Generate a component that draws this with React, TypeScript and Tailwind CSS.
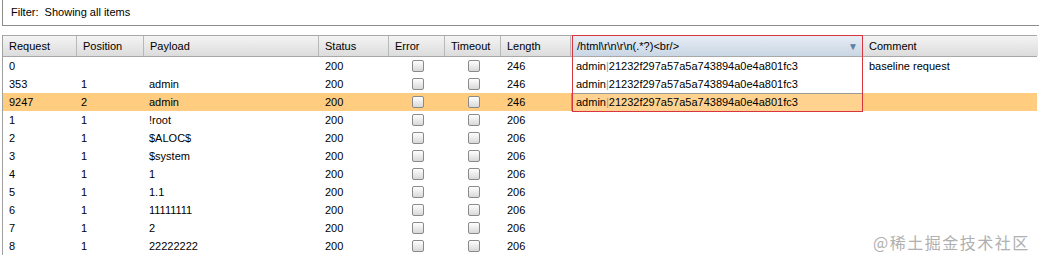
import React from 'react';

const headers = ['Request', 'Position', 'Payload', 'Status', 'Error', 'Timeout', 'Length', '/html\\r\\n\\r\\n(.*?)<br/>', 'Comment'];

type Row = { req: string; pos: string; payload: string; status: string; len: string; hash?: boolean; comment?: string; hl?: boolean };

const rows: Row[] = [
  { req: '0', pos: '', payload: '', status: '200', len: '246', hash: true, comment: 'baseline request' },
  { req: '353', pos: '1', payload: 'admin', status: '200', len: '246', hash: true },
  { req: '9247', pos: '2', payload: 'admin', status: '200', len: '246', hash: true, hl: true },
  { req: '1', pos: '1', payload: '!root', status: '200', len: '206' },
  { req: '2', pos: '1', payload: '$ALOC$', status: '200', len: '206' },
  { req: '3', pos: '1', payload: '$system', status: '200', len: '206' },
  { req: '4', pos: '1', payload: '1', status: '200', len: '206' },
  { req: '5', pos: '1', payload: '1.1', status: '200', len: '206' },
  { req: '6', pos: '1', payload: '11111111', status: '200', len: '206' },
  { req: '7', pos: '1', payload: '2', status: '200', len: '206' },
  { req: '8', pos: '1', payload: '22222222', status: '200', len: '206' },
];

const gridCols = 'grid grid-cols-[74px_67px_175px_70px_56px_56px_70px_292px_175px]';

function Check() {
  return (
    <div className="w-[12px] h-[12px] rounded-[2px] border border-[#8a8a8a] bg-gradient-to-b from-[#ffffff] to-[#d8d8d8]" />
  );
}

function Hash() {
  return (
    <span>
      admin<span className="text-[#999]">|</span>21232f297a57a5a743894a0e4a801fc3
    </span>
  );
}

export default function App() {
  return (
    <div className="relative w-[1039px] h-[257px] bg-white overflow-hidden text-[11px] text-black font-['Liberation_Sans',Arial,sans-serif]">
      <div className="ml-[2px] h-[26px] border-l border-b border-[#8c8c8c] pl-[8px] flex items-center">
        Filter:&nbsp;&nbsp;Showing all items
      </div>
      <div className="relative mt-[9px] ml-[2px] w-[1035px] border-l border-[#a0a0a0]">
        <div className={`${gridCols} h-[22px] border-t border-b border-[#a8a8a8] border-r`}>
          {headers.map((h, i) => (
            <div
              key={i}
              className={`flex items-center pl-[6px] border-r border-[#b8b8b8] last:border-r-0 ${
                i === 7
                  ? 'bg-gradient-to-b from-[#e6edf5] to-[#c9d6e4] justify-between pr-[4px]'
                  : 'bg-gradient-to-b from-[#f4f4f4] to-[#dcdcdc]'
              }`}
            >
              <span>{h}</span>
              {i === 7 && <span className="text-[#5d7fa5] text-[10px]">▼</span>}
            </div>
          ))}
        </div>
        {rows.map((r, i) => (
          <div key={i} className={`${gridCols} h-[18px] ${r.hl ? 'bg-[#ffcc80]' : 'bg-white'}`}>
            <div className="flex items-center pl-[6px]">{r.req}</div>
            <div className="flex items-center pl-[4px]">{r.pos}</div>
            <div className="flex items-center pl-[5px]">{r.payload}</div>
            <div className="flex items-center pl-[6px]">{r.status}</div>
            <div className="flex items-center justify-center pl-[2px]"><Check /></div>
            <div className="flex items-center justify-center pl-[2px]"><Check /></div>
            <div className="flex items-center pl-[6px]">{r.len}</div>
            <div
              className={`flex items-center ${
                r.hl ? 'border-t border-l border-[#9a9a9a] bg-[#ffd38f] pl-[4px]' : 'pl-[5px]'
              }`}
            >
              {r.hash && <Hash />}
            </div>
            <div className="flex items-center pl-[6px]">{r.comment}</div>
          </div>
        ))}
        <div className="absolute left-[569px] top-0 w-[291px] h-[77px] border border-[#d9343f] pointer-events-none" />
      </div>
      <div className="absolute left-[873px] top-[230px] text-[16px] tracking-[1.5px] text-[#b0b0b0] font-['Noto_Sans_CJK_SC',sans-serif]">
        @稀土掘金技术社区
      </div>
    </div>
  );
}
